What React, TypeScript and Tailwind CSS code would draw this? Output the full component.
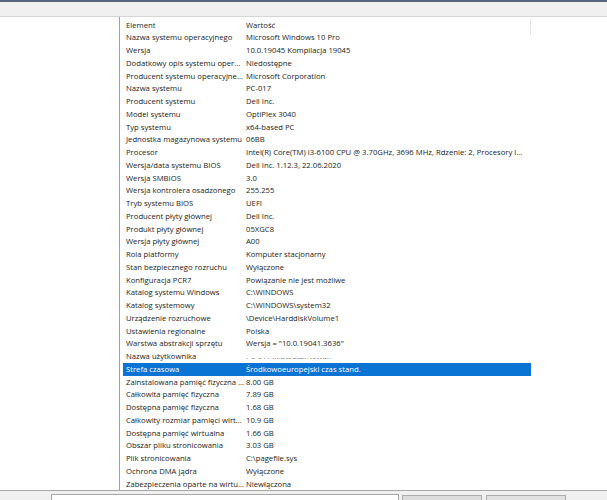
import React from "react";

const rows: [string, string][] = [
  ["Nazwa systemu operacyjnego", "Microsoft Windows 10 Pro"],
  ["Wersja", "10.0.19045 Kompilacja 19045"],
  ["Dodatkowy opis systemu oper...", "Niedostępne"],
  ["Producent systemu operacyjne...", "Microsoft Corporation"],
  ["Nazwa systemu", "PC-017"],
  ["Producent systemu", "Dell Inc."],
  ["Model systemu", "OptiPlex 3040"],
  ["Typ systemu", "x64-based PC"],
  ["Jednostka magazynowa systemu", "06BB"],
  ["Procesor", "Intel(R) Core(TM) i3-6100 CPU @ 3.70GHz, 3696 MHz, Rdzenie: 2, Procesory l..."],
  ["Wersja/data systemu BIOS", "Dell Inc. 1.12.3, 22.06.2020"],
  ["Wersja SMBIOS", "3.0"],
  ["Wersja kontrolera osadzonego", "255.255"],
  ["Tryb systemu BIOS", "UEFI"],
  ["Producent płyty głównej", "Dell Inc."],
  ["Produkt płyty głównej", "05XGC8"],
  ["Wersja płyty głównej", "A00"],
  ["Rola platformy", "Komputer stacjonarny"],
  ["Stan bezpiecznego rozruchu", "Wyłączone"],
  ["Konfiguracja PCR7", "Powiązanie nie jest możliwe"],
  ["Katalog systemu Windows", "C:\\WINDOWS"],
  ["Katalog systemowy", "C:\\WINDOWS\\system32"],
  ["Urządzenie rozruchowe", "\\Device\\HarddiskVolume1"],
  ["Ustawienia regionalne", "Polska"],
  ["Warstwa abstrakcji sprzętu", "Wersja = \"10.0.19041.3636\""],
  ["Nazwa użytkownika", "PC-017\\Mateusz.Nowak"],
  ["Strefa czasowa", "Środkowoeuropejski czas stand."],
  ["Zainstalowana pamięć fizyczna ...", "8.00 GB"],
  ["Całkowita pamięć fizyczna", "7.89 GB"],
  ["Dostępna pamięć fizyczna", "1.68 GB"],
  ["Całkowity rozmiar pamięci wirt...", "10.9 GB"],
  ["Dostępna pamięć wirtualna", "1.66 GB"],
  ["Obszar pliku stronicowania", "3.03 GB"],
  ["Plik stronicowania", "C:\\pagefile.sys"],
  ["Ochrona DMA jądra", "Wyłączone"],
  ["Zabezpieczenia oparte na wirtu...", "Niewłączona"],
];

function Row({ label, value }: { label: string; value: string }) {
  const selected = label === "Strefa czasowa";
  const glitched = label === "Nazwa użytkownika";

  return (
    <div
      className={
        "relative ml-[3px] flex h-[12.75px] w-[408px] items-center whitespace-nowrap leading-[12.75px] " +
        (selected ? "bg-[#0a74d4] text-white" : "text-[#1c1c1c]")
      }
    >
      <span className="w-[123px] overflow-hidden pl-[3px] pr-[2px]">{label}</span>
      <span className={"relative flex-1 overflow-hidden " + (glitched ? "text-[#777]" : "")}>
        {value}
        {glitched && <span className="absolute left-0 top-0 h-[8px] w-full bg-white" />}
      </span>
    </div>
  );
}

export default function App() {
  return (
    <div
      className="flex h-[500px] w-[607px] flex-col overflow-hidden bg-white text-[7.7px]"
      style={{ fontFamily: '"Open Sans", "Noto Sans", sans-serif' }}
    >
      <div className="h-[2px] bg-[#56657a]" />
      <div className="h-[15px] border-b border-[#d6d6d6] bg-[#f0f0f0]" />

      <div className="flex min-h-0 flex-1 border-b border-[#a8a8a8]">
        <div className="w-[120px] border-r border-[#a0a0a0] bg-white" />
        <div className="flex-1 pt-[1.6px]">
          <div className="ml-[3px] flex h-[12.75px] w-[408px] items-center leading-[12.75px] text-[#1c1c1c]">
            <span className="w-[123px] pl-[3px]">Element</span>
            <span className="flex-1">Wartość</span>
            <span className="h-[16px] w-px self-start bg-[#e5e5e5]" />
          </div>
          {rows.map(([label, value]) => (
            <Row key={label} label={label} value={value} />
          ))}
        </div>
      </div>

      <div className="flex h-[9px] items-start gap-[3px] bg-[#f0f0f0] pt-[3px]">
        <span className="w-[48px] pl-[6px] pt-[3px] leading-[12px] text-[#1c1c1c]">Znajdź:</span>
        <div className="h-[8px] w-[348px] border border-[#a8a8a8] bg-white" />
        <div className="mt-[1px] h-[8px] w-[80px] border border-[#adadad] bg-[#dcdcdc]" />
        <div className="ml-[1px] mt-[1px] h-[8px] w-[80px] border border-[#adadad] bg-[#e1e1e1]" />
      </div>
    </div>
  );
}
